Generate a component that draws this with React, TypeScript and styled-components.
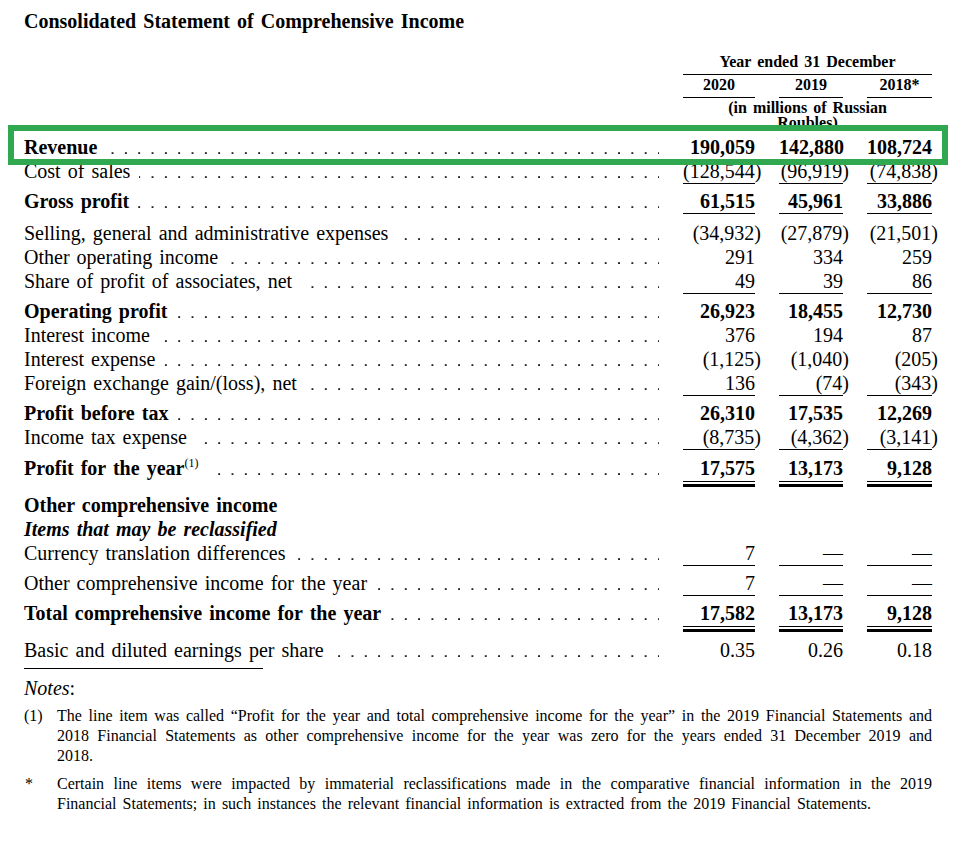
import React from 'react';
import styled, { createGlobalStyle, css } from 'styled-components';

const Global = createGlobalStyle`
  html, body { margin: 0; padding: 0; background: #fff; }
  body {
    font-family: "Liberation Serif", "Times New Roman", serif;
    color: #000;
  }
`;

const Page = styled.div`
  width: 908px;
  padding: 9px 0 24px 24px;
  word-spacing: 0.13em;
`;

const Title = styled.h1`
  margin: 0;
  font-size: 20px;
  line-height: 24px;
  font-weight: bold;
`;

const Columns = css`
  display: grid;
  grid-template-columns: 1fr 72px 64px 65px;
  column-gap: 24px;
  align-items: start;
`;

const Header = styled.div`
  ${Columns};
  margin-top: 19px;
  font-size: 16px;
  line-height: 20px;
  font-weight: bold;
`;

const YearHead = styled.div`
  grid-column: 2 / 5;
  text-align: center;
  padding-bottom: 2px;
  border-bottom: 1px solid #000;
`;

const YearCell = styled.div<{ $col: number }>`
  grid-column: ${(p) => p.$col};
  grid-row: 2;
  text-align: center;
  padding-bottom: 2px;
  border-bottom: 1px solid #000;
`;

const Units = styled.div`
  grid-column: 2 / 5;
  grid-row: 3;
  text-align: center;
  line-height: 15px;
  margin-top: 2px;
  height: 30px;
`;

const Body = styled.div`
  margin-top: 5px;
`;

const Row = styled.div<{ $space: number }>`
  ${Columns};
  margin-top: ${(p) => p.$space}px;
  font-size: 20px;
  line-height: 24px;
`;

const Highlight = styled.div`
  position: relative;
  z-index: 1;
  margin: -10px -16px -6px;
  padding: 4px 10px 0;
  border: 6px solid #2fa84f;
  background: #fff;
`;

const LabelCell = styled.div<{ $dots: boolean }>`
  ${(p) =>
    p.$dots &&
    css`
      background-image: radial-gradient(circle at 8.6px 18.2px, #222 0.75px, rgba(0, 0, 0, 0) 1.25px);
      background-size: 13.333px 24px;
      background-repeat: repeat-x;
    `}
`;

const LabelText = styled.span<{ $bold?: boolean; $italic?: boolean }>`
  background: #fff;
  padding-right: 9px;
  font-weight: ${(p) => (p.$bold ? 'bold' : 'normal')};
  font-style: ${(p) => (p.$italic ? 'italic' : 'normal')};
`;

const Sup = styled.sup`
  font-size: 12px;
  font-weight: normal;
  vertical-align: 8px;
  line-height: 0;
  word-spacing: 0;
`;

const NumCell = styled.div<{ $bold?: boolean; $rule?: 'single' | 'double' }>`
  text-align: right;
  white-space: nowrap;
  font-weight: ${(p) => (p.$bold ? 'bold' : 'normal')};
  border-bottom: ${(p) => (p.$rule === 'single' ? '1px solid #000' : '0')};
`;

const Num = styled.span<{ $paren: boolean }>`
  margin-right: ${(p) => (p.$paren ? '-6px' : '0')};
`;

const DoubleRule = styled.div`
  margin-top: 1px;
  height: 2px;
  border-top: 1px solid #000;
  border-bottom: 3px solid #000;
`;

const Separator = styled.div`
  width: 239px;
  margin-top: 6px;
  border-top: 1px solid #000;
`;

const NotesTitle = styled.div`
  margin-top: 7px;
  font-size: 20px;
  line-height: 24px;
`;

const Italic = styled.i`
  font-style: italic;
`;

const Note = styled.div<{ $space: number }>`
  display: grid;
  grid-template-columns: 33px 1fr;
  margin-top: ${(p) => p.$space}px;
  font-size: 16px;
  line-height: 20px;
`;

const NoteMark = styled.div<{ $indent?: number }>`
  padding-left: ${(p) => p.$indent ?? 0}px;
`;

const NoteLine = styled.div<{ $last?: boolean }>`
  text-align: justify;
  text-align-last: ${(p) => (p.$last ? 'left' : 'justify')};
`;

type Line = {
  label: string;
  sup?: string;
  bold?: boolean;
  italic?: boolean;
  dots?: boolean;
  values?: string[];
  rule?: 'single' | 'double';
  space: number;
  highlight?: boolean;
};

const lines: Line[] = [
  { label: 'Revenue', bold: true, values: ['190,059', '142,880', '108,724'], space: 0, highlight: true },
  { label: 'Cost of sales', values: ['(128,544)', '(96,919)', '(74,838)'], rule: 'single', space: 0 },
  { label: 'Gross profit', bold: true, values: ['61,515', '45,961', '33,886'], rule: 'single', space: 5 },
  { label: 'Selling, general and administrative expenses', values: ['(34,932)', '(27,879)', '(21,501)'], space: 7 },
  { label: 'Other operating income', values: ['291', '334', '259'], space: 0 },
  { label: 'Share of profit of associates, net', values: ['49', '39', '86'], rule: 'single', space: 0 },
  { label: 'Operating profit', bold: true, values: ['26,923', '18,455', '12,730'], space: 5 },
  { label: 'Interest income', values: ['376', '194', '87'], space: 0 },
  { label: 'Interest expense', values: ['(1,125)', '(1,040)', '(205)'], space: 0 },
  { label: 'Foreign exchange gain/(loss), net', values: ['136', '(74)', '(343)'], rule: 'single', space: 0 },
  { label: 'Profit before tax', bold: true, values: ['26,310', '17,535', '12,269'], space: 5 },
  { label: 'Income tax expense', values: ['(8,735)', '(4,362)', '(3,141)'], rule: 'single', space: 0 },
  { label: 'Profit for the year', sup: '(1)', bold: true, values: ['17,575', '13,173', '9,128'], rule: 'double', space: 6 },
  { label: 'Other comprehensive income', bold: true, dots: false, space: 6 },
  { label: 'Items that may be reclassified', bold: true, italic: true, dots: false, space: 0 },
  { label: 'Currency translation differences', values: ['7', '—', '—'], rule: 'single', space: 0 },
  { label: 'Other comprehensive income for the year', values: ['7', '—', '—'], rule: 'single', space: 5 },
  { label: 'Total comprehensive income for the year', bold: true, values: ['17,582', '13,173', '9,128'], rule: 'double', space: 5 },
  { label: 'Basic and diluted earnings per share', values: ['0.35', '0.26', '0.18'], space: 6 },
];

function StatementRow({ line }: { line: Line }) {
  const row = (
    <Row $space={line.highlight ? 0 : line.space}>
      <LabelCell $dots={line.dots !== false}>
        <LabelText $bold={line.bold} $italic={line.italic}>
          {line.label}
          {line.sup && <Sup>{line.sup}</Sup>}
        </LabelText>
      </LabelCell>
      {line.values?.map((v, i) => (
        <NumCell key={i} $bold={line.bold} $rule={line.rule}>
          <Num $paren={v.startsWith('(')}>{v}</Num>
          {line.rule === 'double' && <DoubleRule />}
        </NumCell>
      ))}
    </Row>
  );
  return line.highlight ? <Highlight>{row}</Highlight> : row;
}

export default function App() {
  return (
    <>
      <Global />
      <Page>
        <Title>Consolidated Statement of Comprehensive Income</Title>
        <Header>
          <YearHead>Year ended 31 December</YearHead>
          <YearCell $col={2}>2020</YearCell>
          <YearCell $col={3}>2019</YearCell>
          <YearCell $col={4}>2018*</YearCell>
          <Units>
            (in millions of Russian
            <br />
            Roubles)
          </Units>
        </Header>
        <Body>
          {lines.map((l) => (
            <StatementRow key={l.label} line={l} />
          ))}
        </Body>
        <Separator />
        <NotesTitle>
          <Italic>Notes</Italic>:
        </NotesTitle>
        <Note $space={6}>
          <NoteMark>(1)</NoteMark>
          <div>
            <NoteLine>
              The line item was called “Profit for the year and total comprehensive income for the year” in the 2019 Financial Statements and
            </NoteLine>
            <NoteLine>
              2018 Financial Statements as other comprehensive income for the year was zero for the years ended 31 December 2019 and
            </NoteLine>
            <NoteLine $last>2018.</NoteLine>
          </div>
        </Note>
        <Note $space={8}>
          <NoteMark $indent={1}>*</NoteMark>
          <div>
            <NoteLine>
              Certain line items were impacted by immaterial reclassifications made in the comparative financial information in the 2019
            </NoteLine>
            <NoteLine $last>
              Financial Statements; in such instances the relevant financial information is extracted from the 2019 Financial Statements.
            </NoteLine>
          </div>
        </Note>
      </Page>
    </>
  );
}
